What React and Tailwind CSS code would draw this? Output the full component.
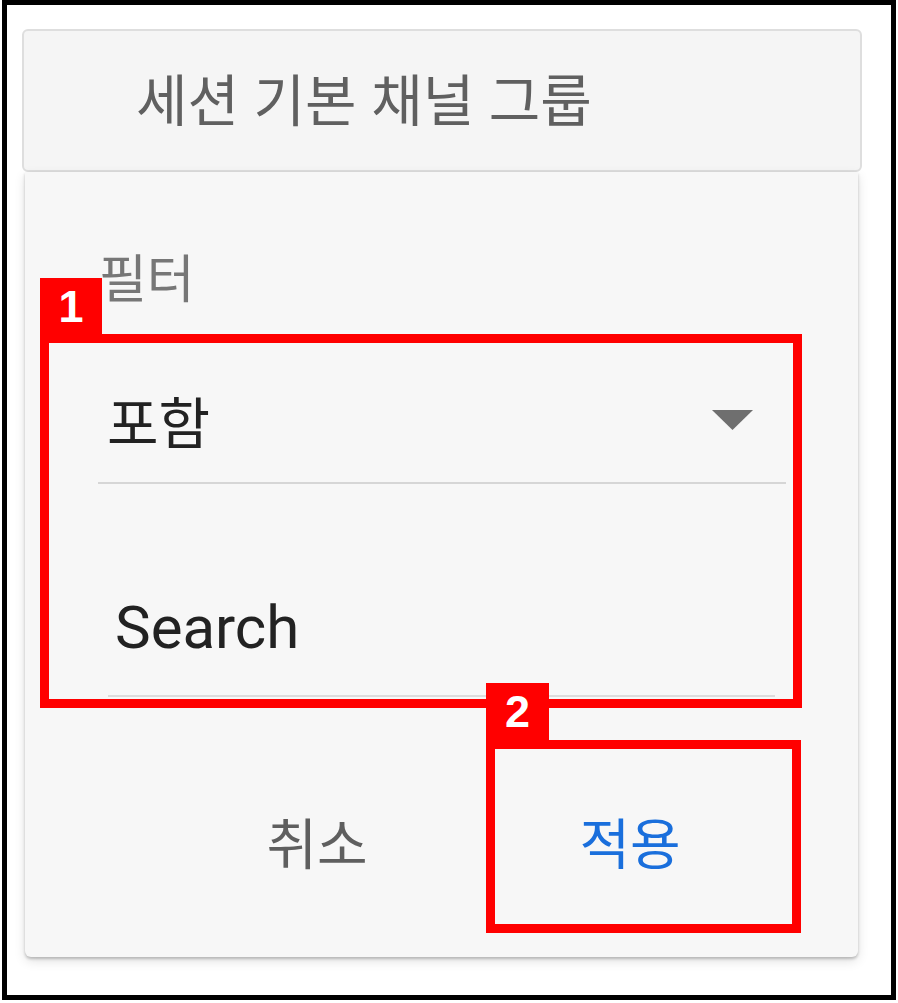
import React from 'react';

const kr = { fontFamily: '"Noto Sans CJK KR", "Noto Sans", sans-serif' };
const roboto = { fontFamily: 'Roboto, "Noto Sans CJK KR", sans-serif' };

const Marker = ({ label, className }) => (
  <div
    className={`absolute flex items-center justify-center bg-[#ff0000] text-white font-bold text-[45px] leading-none ${className}`}
    style={{ fontFamily: '"Liberation Sans", Arial, sans-serif' }}
  >
    {label}
  </div>
);

const FilterCard = () => {
  return (
    <div className="ml-[18px] w-[833px] h-[785px] bg-[#f7f7f7] rounded-b-[6px] shadow-[0_2px_3px_rgba(0,0,0,0.22),0_4px_12px_rgba(0,0,0,0.12)] pt-[78px] flex flex-col">
      <div className="pl-[74px] text-[52px] leading-none text-[#777777]" style={kr}>
        필터
      </div>

      <div className="ml-[73px] mt-[88px] w-[688px] h-[94px] border-b-2 border-[#d6d6d6] flex items-center justify-between pl-[9px] pr-[33px] pb-[32px]">
        <span className="text-[56px] leading-none text-[#222222]" style={kr}>
          포함
        </span>
        <svg width="41" height="20" viewBox="0 0 41 20">
          <polygon points="0,0 41,0 20.5,20" fill="#6f6f6f" />
        </svg>
      </div>

      <div className="ml-[83px] mt-[114px] w-[667px] border-b-2 border-[#dcdcdc] pl-[7px] pb-[37px]">
        <span className="text-[60px] leading-none text-[#222222]" style={roboto}>
          Search
        </span>
      </div>

      <div className="mt-[116px] pl-[192px] flex gap-[113px]">
        <button className="w-[200px] text-[55px] leading-none text-[#5f5f5f]" style={kr}>
          취소
        </button>
        <button className="w-[200px] text-[55px] leading-none text-[#1a6fdc]" style={kr}>
          적용
        </button>
      </div>
    </div>
  );
};

export default function App() {
  return (
    <div className="relative w-[898px] h-[1003px] bg-white pl-[2px]">
      <div className="w-[894px] h-[1000px] border-[5px] border-black flex flex-col">
        <div className="ml-[15px] mt-[24px] w-[840px] h-[143px] border-2 border-[#dedede] rounded-[6px] bg-[#f5f5f5] flex items-center pl-[112px] pb-[7px]">
          <span className="text-[56px] leading-none text-[#606060] [word-spacing:2px]" style={kr}>
            세션 기본 채널 그룹
          </span>
        </div>
        <FilterCard />
      </div>

      <div className="absolute left-[40px] top-[334px] w-[762px] h-[374px] border-[9px] border-[#ff0000]" />
      <Marker label="1" className="left-[40px] top-[278px] w-[62px] h-[56px]" />

      <div className="absolute left-[486px] top-[740px] w-[315px] h-[193px] border-[9px] border-[#ff0000]" />
      <Marker label="2" className="left-[486px] top-[683px] w-[63px] h-[57px]" />
    </div>
  );
}
